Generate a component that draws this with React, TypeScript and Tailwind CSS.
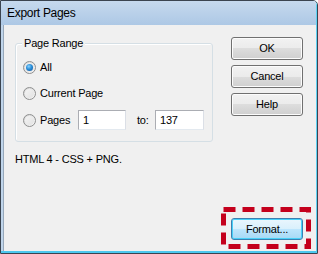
import React from "react";

const font = "font-['Liberation_Sans',Arial,sans-serif]";

function Radio({ checked }: { checked?: boolean }) {
  return (
    <span className="flex h-[13px] w-[13px] shrink-0 items-center justify-center rounded-full border border-[#8e8f8f] bg-gradient-to-br from-[#d6d6d6] to-[#f8f8f8]">
      <span className="flex h-[9px] w-[9px] items-center justify-center rounded-full bg-gradient-to-br from-[#f4f4f4] to-[#e2e2e2]">
        {checked && (
          <span className="h-[7px] w-[7px] rounded-full bg-[radial-gradient(circle_at_40%_35%,#8ad2ff_0%,#2b8fd8_45%,#0d4f9a_100%)]" />
        )}
      </span>
    </span>
  );
}

function Button({ label, focused }: { label: string; focused?: boolean }) {
  return (
    <button
      className={
        focused
          ? "flex h-[22px] w-[72px] items-center justify-center rounded-[3px] border border-[#3c7fb1] bg-[linear-gradient(#eaf6fd_0%,#d9f0fc_50%,#bee6fd_50%,#a7d9f5_100%)] text-[11px] tracking-[-0.2px] text-black shadow-[inset_0_0_0_1px_#48d0f8]"
          : "flex h-[23px] w-[72px] items-center justify-center rounded-[3px] border border-[#707070] bg-[linear-gradient(#f2f2f2_0%,#ebebeb_50%,#dddddd_50%,#cfcfcf_100%)] text-[11px] tracking-[-0.2px] text-black shadow-[inset_0_0_0_1px_#fcfcfc]"
      }
    >
      {label}
    </button>
  );
}

function TextBox({ value, w }: { value: string; w: string }) {
  return (
    <div
      className={`${w} flex h-[20px] items-center border border-[#abadb3] border-b-[#e3e9ef] border-r-[#dbdfe6] bg-white pl-[4px] text-[11px]`}
    >
      {value}
    </div>
  );
}

export default function App() {
  return (
    <div className={`${font} relative h-[254px] w-[318px] overflow-hidden rounded-tr-[5px] border border-[#3b4450] text-black`}>
      <div className="flex h-full flex-col rounded-tr-[4px] border-r border-b-2 border-r-[#5fd2f4] border-b-[#4cc8ee]">
        {/* Title bar */}
        <div className="flex h-[24px] shrink-0 items-center bg-[linear-gradient(#c6d9ee,#adc8e5)] pl-[6px] text-[12px] tracking-[-0.3px]">
          Export Pages
        </div>

        {/* Client area */}
        <div className="flex flex-1 border-l-2 border-[#c0d5eb]">
          <div className="flex flex-1 border-l border-[#97a8ba] bg-[#f0f0f0] tracking-[-0.2px]">
            {/* Left column */}
            <div className="flex w-[209px] flex-col pl-[11px] pt-[18px]">
              <div className="flex h-[99px] w-[198px] flex-col rounded-[3px] border border-[#d5dfe5] shadow-[inset_1px_1px_0_#ffffff]">
                <span className="-mt-[7px] ml-[6px] self-start bg-[#f0f0f0] px-[2px] text-[11px] leading-[13px]">
                  Page Range
                </span>
                <div className="mt-[11px] flex flex-col pl-[7px] text-[11px] leading-[13px]">
                  <div className="flex h-[13px] items-center gap-[4px]">
                    <Radio checked />
                    <span>All</span>
                  </div>
                  <div className="mt-[13px] flex h-[13px] items-center gap-[4px]">
                    <Radio />
                    <span>Current Page</span>
                  </div>
                  <div className="mt-[10px] flex h-[20px] items-center">
                    <Radio />
                    <span className="ml-[4px] w-[38px]">Pages</span>
                    <TextBox value="1" w="w-[48px]" />
                    <span className="ml-[11px] w-[18px]">to:</span>
                    <TextBox value="137" w="w-[49px]" />
                  </div>
                </div>
              </div>
              <div className="mt-[11px] text-[11px] leading-[13px]">HTML 4 - CSS + PNG.</div>
            </div>

            {/* Right column */}
            <div className="ml-[18px] flex flex-col pb-[11px] pt-[12px]">
              <div className="flex flex-col gap-[5px]">
                <Button label="OK" />
                <Button label="Cancel" />
                <Button label="Help" />
              </div>
              <div className="mt-auto">
                <Button label="Format..." focused />
              </div>
            </div>
          </div>
        </div>
      </div>

      {/* Red dashed annotation */}
      <svg className="absolute left-[219px] top-[205px]" width="94" height="46" viewBox="0 0 94 46">
        <rect x="3.5" y="3.5" width="85" height="37" fill="none" stroke="#c4001c" strokeWidth="5" strokeDasharray="12 7" />
      </svg>
    </div>
  );
}
